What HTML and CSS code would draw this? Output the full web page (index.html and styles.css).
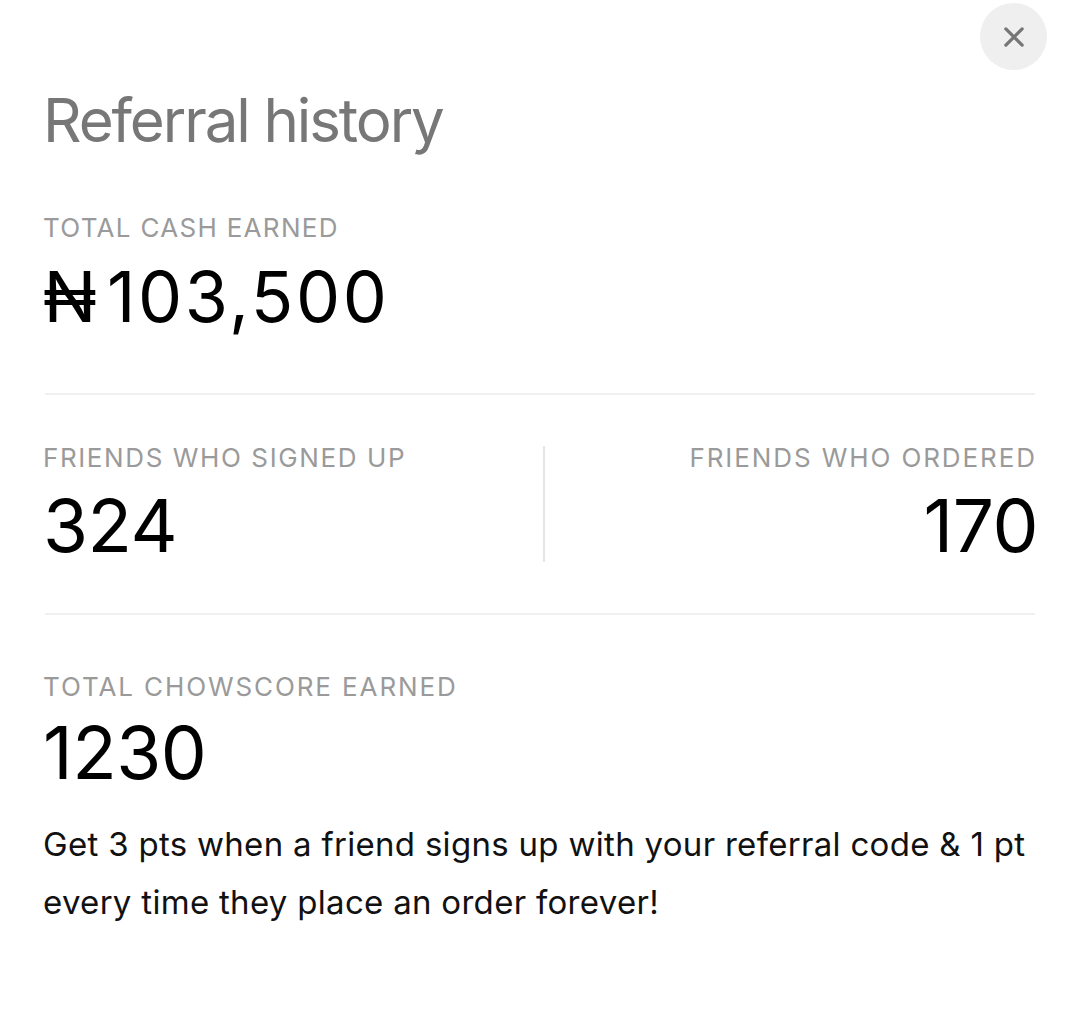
FILE: index.html
```html
<!DOCTYPE html>
<html lang="en">
<head>
<meta charset="utf-8">
<title>Referral history</title>
<link rel="stylesheet" href="styles.css">
</head>
<body>
<main class="sheet">
  <button class="close" aria-label="Close">
    <svg viewBox="0 0 24 24" width="30" height="30"><path d="M5.5 5.5 L18.5 18.5 M18.5 5.5 L5.5 18.5" stroke="#767676" stroke-width="2.6" stroke-linecap="round" fill="none"/></svg>
  </button>
  <h1 class="title">Referral history</h1>
  <section class="block">
    <div class="label label-cash">TOTAL CASH EARNED</div>
    <div class="amount"><span class="currency">₦</span>103,500</div>
  </section>
  <hr class="rule rule-top">
  <section class="stats">
    <div class="stat">
      <div class="label">FRIENDS WHO SIGNED UP</div>
      <div class="number">324</div>
    </div>
    <div class="vsep"></div>
    <div class="stat stat-right">
      <div class="label">FRIENDS WHO ORDERED</div>
      <div class="number">170</div>
    </div>
  </section>
  <hr class="rule rule-bottom">
  <section class="block score">
    <div class="label">TOTAL CHOWSCORE EARNED</div>
    <div class="number number-score">1230</div>
    <p class="note">Get 3 pts when a friend signs up with your referral code &amp; 1 pt every time they place an order forever!</p>
  </section>
</main>
</body>
</html>
```
FILE: styles.css
```css
* { box-sizing: border-box; }
html, body { margin: 0; padding: 0; background: #ffffff; }
body {
  font-family: Inter, "Noto Sans", sans-serif;
  color: #000;
}
.sheet {
  position: relative;
  width: 1080px;
  min-height: 1015px;
  padding: 84px 45px 0 43px;
}
.close {
  position: absolute;
  top: 3px;
  right: 33px;
  width: 67px;
  height: 67px;
  border-radius: 50%;
  border: none;
  background: #efefef;
  display: flex;
  align-items: center;
  justify-content: center;
  padding: 0;
}
.title {
  margin: 0;
  font-size: 60px;
  line-height: 72px;
  font-weight: 400;
  color: #777777;
  letter-spacing: -2.1px;
}
.block { display: flex; flex-direction: column; }
.label {
  font-size: 26px;
  line-height: 24px;
  color: #9a9a9a;
  letter-spacing: 1.6px;
  white-space: nowrap;
}
.stat-right .label { letter-spacing: 1.9px; margin-right: -1.9px; }
.score .label { letter-spacing: 1.9px; }
.label-cash {
  margin-top: 60px;
  letter-spacing: 1.3px;
}
.amount {
  margin-top: 17px;
  font-size: 70px;
  line-height: 80px;
  letter-spacing: 2.6px;
}
.currency { margin-right: 10px; letter-spacing: 0; }
.rule {
  margin: 0;
  border: none;
  height: 2px;
  background: #f0f0f0;
}
.rule-top { margin-top: 56px; margin-left: 2px; }
.stats {
  display: grid;
  grid-template-columns: 500px 2px 1fr;
  margin-top: 51px;
  height: 116px;
}
.stat { display: flex; flex-direction: column; }
.stat-right { align-items: flex-end; }
.vsep { background: #e6e6e6; }
.number {
  margin-top: 19px;
  font-size: 73px;
  line-height: 73px;
  letter-spacing: -0.5px;
}
.stat-right .number { margin-right: -3px; }
.rule-bottom { margin-top: 51px; margin-left: 2px; }
.score .label { margin-top: 60px; }
.number-score { margin-top: 17px; }
.note {
  margin: 26px 0 0 0;
  font-size: 33px;
  line-height: 58px;
  color: #111;
  letter-spacing: 0.3px;
}
```
